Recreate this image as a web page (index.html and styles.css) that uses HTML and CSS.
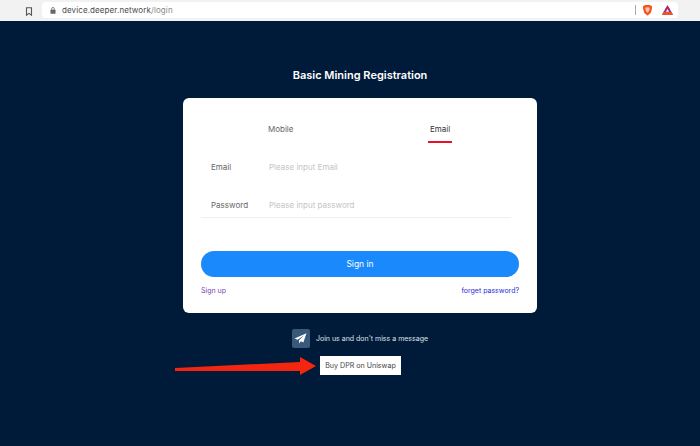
FILE: index.html
```html
<!DOCTYPE html>
<html lang="en">
<head>
<meta charset="utf-8">
<title>Basic Mining Registration</title>
<link rel="stylesheet" href="styles.css">
</head>
<body>
<header class="browser">
  <svg class="bookmark" width="8" height="9" viewBox="0 0 8 9"><path d="M1.500.8h5v7.400L4 6.400 1.500 8.200z" fill="none" stroke="#555" stroke-width="1.100"/></svg>
  <div class="urlbar">
    <svg class="lock" width="6" height="7" viewBox="0 0 6 7"><rect x="0.500" y="2.800" width="5" height="4" rx="0.500" fill="#666"/><path d="M1.700 3V1.800a1.300 1.300 0 0 1 2.600 0V3" fill="none" stroke="#666" stroke-width=".8"/></svg>
    <span class="url">device.deeper.network<span class="path">/login</span></span>
    <span class="divider"></span>
    <svg class="brave" width="11" height="11" viewBox="0 0 14 14"><path d="M3.800 0h6.400l1.200 1.200 1.300-.2-.1 1.400.4 1-1.800 6.400-3.500 3.200-.7.500-.7-.5-3.500-3.200L1 3.400l.4-1L1.300 1l1.300.2z" fill="#f1561f"/><path d="M4 3.500 7 2.800l3 .7-1 4.200L7 10 5 7.700z" fill="#fff" opacity=".65"/></svg>
    <svg class="bat" width="11" height="10" viewBox="0 0 15 13"><path d="M7.500 0 15 13H0z" fill="#7a2a8c"/><path d="M7.500 0 11.500 7H3.500z" fill="#b5246e"/><path d="M0 13h15l-2.300-4H2.300z" fill="#f0531f"/><path d="M7.500 5 9.700 9H5.300z" fill="#fff"/></svg>
  </div>
</header>
<main class="page">
  <h1 class="title">Basic Mining Registration</h1>
  <section class="card">
    <div class="tabs">
      <span class="tab">Mobile</span>
      <span class="tab tab-active">Email</span>
    </div>
    <div class="field">
      <span class="label">Email</span>
      <span class="placeholder">Please input Email</span>
    </div>
    <div class="field field-last">
      <span class="label">Password</span>
      <span class="placeholder">Please input password</span>
    </div>
    <button class="signin">Sign in</button>
    <div class="links">
      <a class="signup">Sign up</a>
      <a class="forgot">forget password?</a>
    </div>
  </section>
  <div class="join">
    <span class="tg"><svg width="13" height="11" viewBox="0 0 14 12"><path d="M13.500.3 0.500 6l3.400 1.400L11 2.500 5.400 8v3.400l2-2.300 2.700 1.200z" fill="#fff"/></svg></span>
    <span class="join-text">Join us and don't miss a message</span>
  </div>
  <button class="buy">Buy DPR on Uniswap</button>
</main>
<svg class="arrow" width="141" height="19" viewBox="0 0 141 19"><path d="M0 11 125 5V0L141 9 125 18V14L0 14z" fill="#f5260f"/></svg>
</body>
</html>
```
FILE: styles.css
```css
* { box-sizing: border-box; }
html, body { margin: 0; height: 100%; }
body {
  width: 700px;
  height: 446px;
  overflow: hidden;
  position: relative;
  background: #001a3a;
  font-family: Inter, "Liberation Sans", sans-serif;
  display: flex;
  flex-direction: column;
}
.browser {
  height: 21px;
  flex: none;
  background: #f2f2f2;
  display: flex;
  align-items: flex-start;
  padding: 2px 22px 0 25px;
  gap: 9px;
}
.bookmark { margin-top: 5px; }
.urlbar {
  flex: 1;
  height: 16px;
  background: #fff;
  border-radius: 4px;
  display: flex;
  align-items: center;
  padding-left: 8px;
}
.lock { margin-right: 6px; }
.url { font-size: 8px; color: #4a4a4a; flex: 1; letter-spacing: 0.1px; }
.path { color: #888; }
.divider { width: 1px; height: 10px; background: #aaa; margin-right: 6px; }
.brave { margin-right: 9px; }
.bat { margin-right: 5px; }
.page {
  flex: 1;
  display: flex;
  flex-direction: column;
  align-items: center;
  padding-left: 20px;
}
.title {
  margin: 47px 0 16px;
  height: 14px;
  line-height: 14px;
  font-size: 11px;
  font-weight: 600;
  color: #fff;
}
.card {
  width: 354px;
  height: 215px;
  background: #fff;
  border-radius: 6px;
  padding: 0 18px;
}
.tabs {
  display: flex;
  height: 50px;
  align-items: flex-start;
  margin-left: 67px;
  padding-top: 25px;
  gap: 136px;
}
.tab {
  font-size: 8px;
  line-height: 12px;
  color: #666;
  width: 24px;
  white-space: nowrap;
  text-align: center;
}
.tab-active {
  color: #333;
  height: 20px;
  border-bottom: 2px solid #e8112d;
}
.field {
  display: flex;
  align-items: center;
  height: 26px;
  margin-top: 6px;
  font-size: 8px;
}
.field-last {
  margin-top: 12px;
  margin-right: 8px;
  border-bottom: 1px solid #f0f0f0;
}
.label { width: 68px; padding-left: 10px; color: #666; }
.placeholder { color: #c4c4c4; }
.signin {
  display: block;
  width: 318px;
  height: 26px;
  margin-top: 33px;
  border: 0;
  border-radius: 13px;
  background: #1a89fb;
  color: #fff;
  font: 400 8.500px Inter, "Liberation Sans", sans-serif;
}
.links {
  display: flex;
  justify-content: space-between;
  margin-top: 8px;
  font-size: 7px;
  line-height: 12px;
}
.signup { color: #7b3fb5; }
.forgot { color: #2b2bd8; }
.join {
  display: flex;
  align-items: center;
  margin-top: 16px;
  gap: 6px;
}
.tg {
  width: 18px;
  height: 19px;
  border-radius: 2px;
  background: #39597a;
  display: flex;
  align-items: center;
  justify-content: center;
}
.join-text { font-size: 7px; color: #dfe3e8; }
.buy {
  width: 81px;
  height: 19px;
  margin-top: 8px;
  margin-left: 1px;
  padding: 0;
  border: 0;
  background: #fff;
  color: #444;
  font: 400 7.100px Inter, "Liberation Sans", sans-serif;
}
.arrow { position: absolute; left: 175px; top: 357px; }
```
